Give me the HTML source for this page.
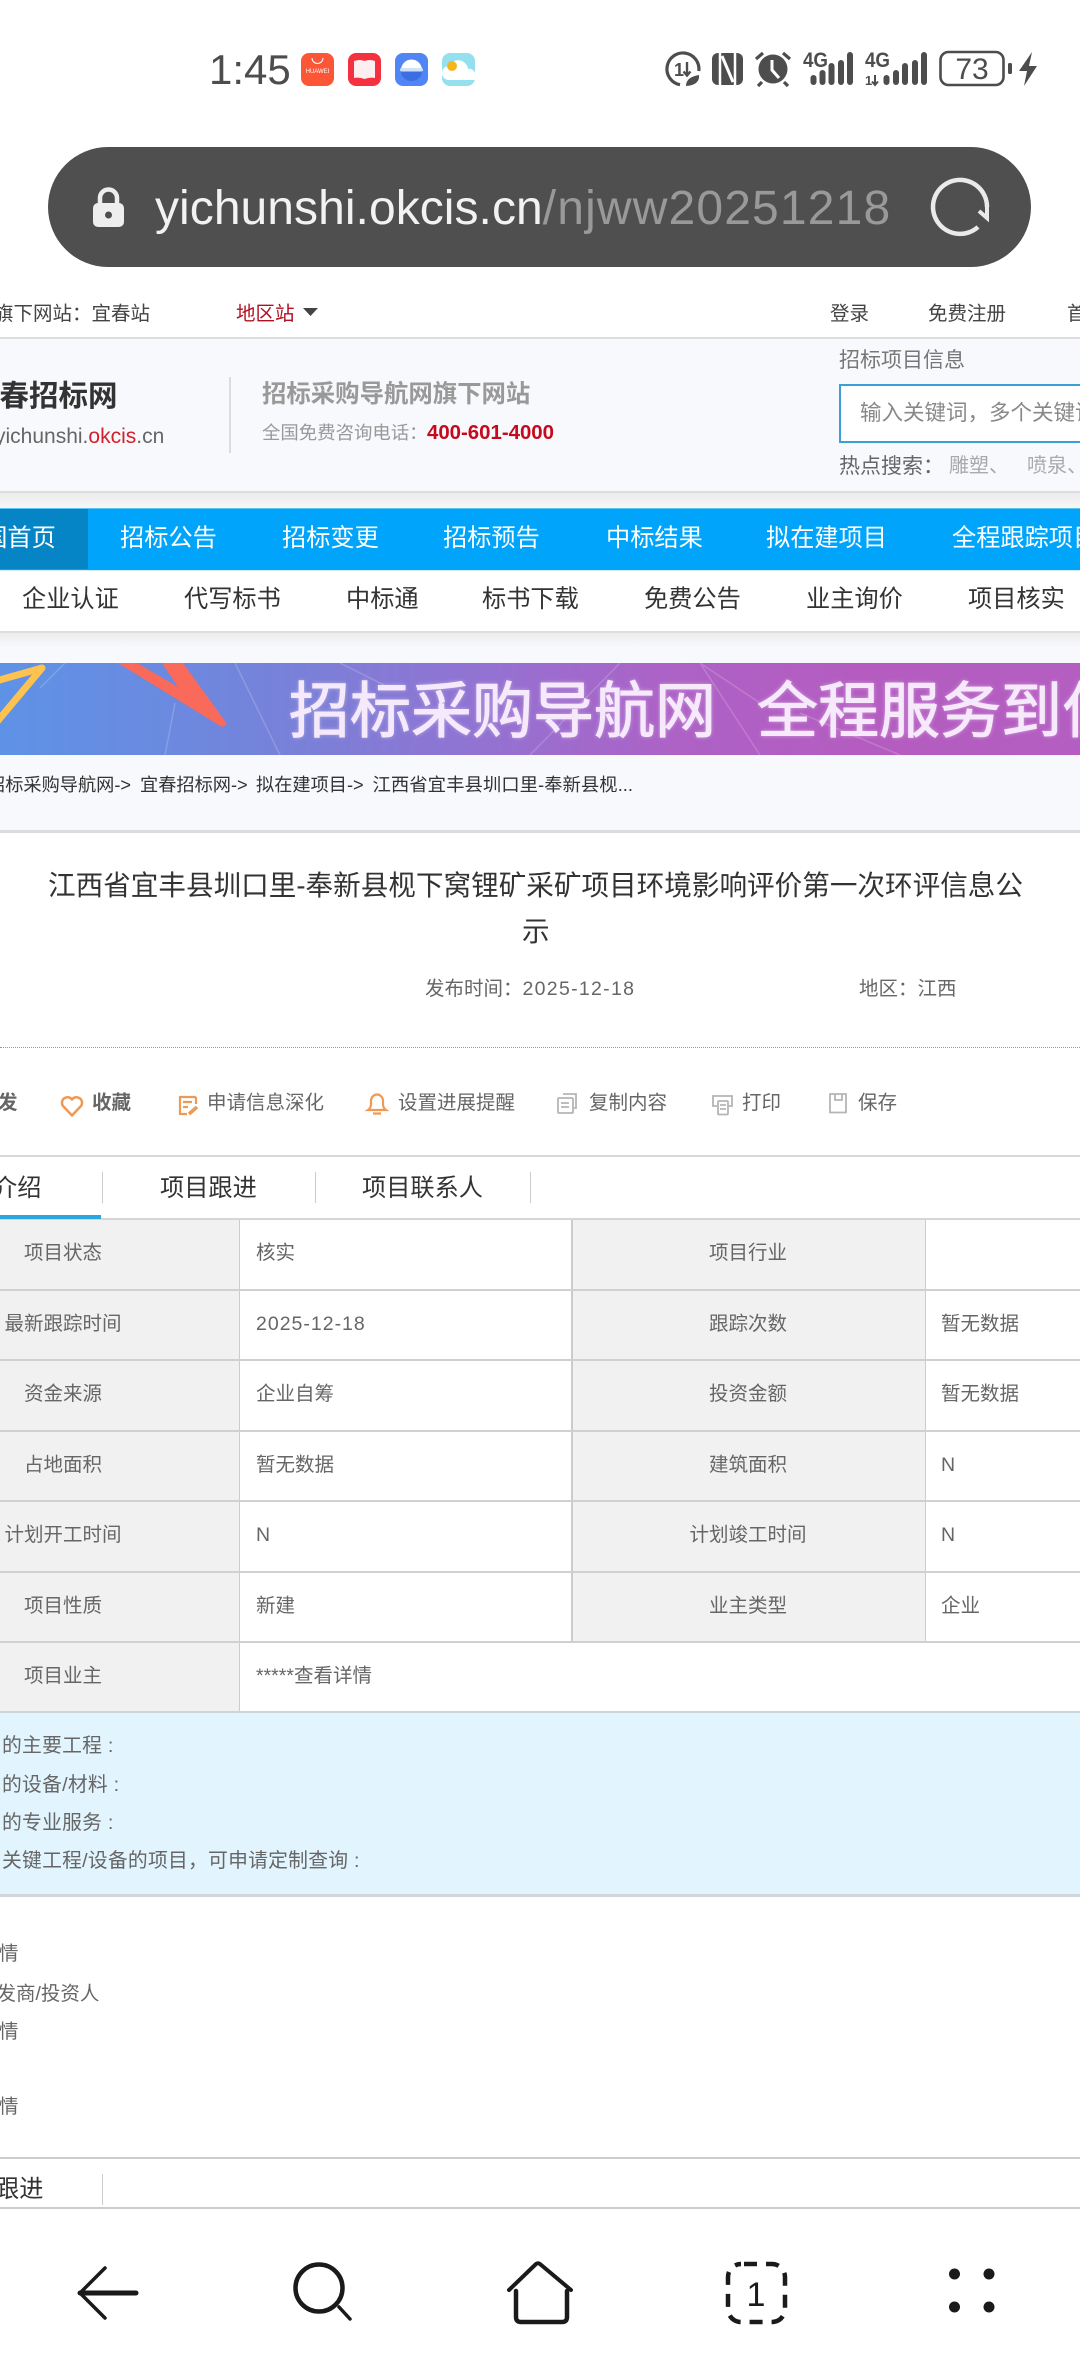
<!DOCTYPE html>
<html lang="zh"><head><meta charset="utf-8"><title>江西省宜丰县圳口里-奉新县枧下窝锂矿采矿项目</title>
<style>
html,body{margin:0;padding:0;background:#fff}
#p{position:relative;width:1080px;height:2376px;overflow:hidden;background:#fff;font-family:"Liberation Sans","Noto Sans CJK SC",sans-serif;color:#666}
.t{position:absolute;white-space:nowrap;line-height:1}
.b{position:absolute}
svg{position:absolute;overflow:visible}
.s20{font-size:19.5px}
.p{font-size:19.8px;letter-spacing:.25px}
.n{font-size:24.2px;color:#fff;top:527px}
.u{font-size:24.2px;color:#333;top:588px}
.c1{font-size:19.5px;transform:translateX(-50%);left:63px}
.c3{font-size:19.5px;transform:translateX(-50%);left:748px}
.c2{font-size:19.5px;left:256px}
.c4{font-size:19.5px;left:941px}
</style></head><body><div id="p">

<!-- status bar -->
<div class="t" style="left:209px;top:49px;font-size:42px;color:#4d4d4d">1:45</div>
<svg style="left:0;top:0" width="1080" height="110">
 <rect x="301" y="53" width="33" height="33" rx="8" fill="#fc5636"/>
 <path d="M312 58a5.500 5.500 0 0 0 11 0" fill="none" stroke="#fff" stroke-width="1"/>
 <text x="317.500" y="73" font-size="6" fill="#fff" text-anchor="middle" font-family="Liberation Sans">HUAWEI</text>
 <rect x="348" y="53" width="33" height="33" rx="8" fill="#f5313f"/>
 <path d="M354 61q6-2 10.500 0q5-2 10.500 0v17q-5-1-10.500 1q-5-2-10.500-1z" fill="#fdeef0"/>
 <rect x="395" y="53" width="33" height="33" rx="8" fill="#4f85f5"/>
 <path d="M401 70a10.500 10.500 0 0 1 21 0z" fill="#fff"/><path d="M401 71h21a10.500 10 0 0 1-21 0z" fill="#3b6ee0"/><rect x="400" y="68" width="23" height="3.500" rx="1.700" fill="#cfe0fb"/>
 <rect x="442" y="53" width="33" height="33" rx="8" fill="#95e0ee"/>
 <path d="M449 80a7 7 0 0 1 0-14a10 10 0 0 1 19 3a5.500 5.500 0 0 1 7 5v6z" fill="#fff"/>
 <circle cx="452" cy="66" r="5" fill="#f5b51f"/>

 <!-- data saver -->
 <path d="M680 84.700A16 16 0 1 1 698.800 71" fill="none" stroke="#4d4d4d" stroke-width="3.200"/>
 <text x="674" y="76" font-size="18" font-weight="bold" fill="#4d4d4d" font-family="Liberation Sans">1</text>
 <path d="M687 62v13m-3.500-3.500l3.500 4 3.500-4" fill="none" stroke="#4d4d4d" stroke-width="2.400"/>
 <path d="M686 86q0-9 13-11q1 10-13 11z" fill="#4d4d4d"/>
 <!-- NFC -->
 <rect x="712" y="53" width="31" height="32" rx="6" fill="#4d4d4d"/>
 <path d="M720 53v32M735 53v32" stroke="#fff" stroke-width="2.500"/>
 <path d="M722 56l11 26" stroke="#fff" stroke-width="3"/>
 <!-- alarm -->
 <circle cx="773" cy="69" r="14.500" fill="#4d4d4d"/>
 <path d="M772 60v10l7 8" fill="none" stroke="#fff" stroke-width="3"/>
 <path d="M756 59l7-6M790 59l-7-6M762 82l-4 4M784 82l4 4" stroke="#4d4d4d" stroke-width="3.200"/>
 <!-- sig 1 -->
 <text x="803" y="67" font-size="21" font-weight="bold" fill="#4d4d4d" font-family="Liberation Sans" textLength="25" lengthAdjust="spacingAndGlyphs">4G</text>
 <g fill="#4d4d4d"><rect x="810.500" y="75" width="6" height="10" rx="3"/><rect x="819.500" y="70" width="6" height="15" rx="3"/><rect x="828.500" y="63" width="6" height="22" rx="3"/><rect x="838" y="60" width="6" height="25" rx="3"/><rect x="847" y="52" width="6" height="33" rx="3"/></g>
 <!-- sig 2 -->
 <text x="865" y="67" font-size="21" font-weight="bold" fill="#4d4d4d" font-family="Liberation Sans" textLength="25" lengthAdjust="spacingAndGlyphs">4G</text>
 <text x="865" y="85" font-size="13" font-weight="bold" fill="#4d4d4d" font-family="Liberation Sans">1</text>
 <path d="M875 75v10m-3-3.500l3 3.500 3-3.500" fill="none" stroke="#4d4d4d" stroke-width="2"/>
 <g fill="#4d4d4d"><rect x="883.500" y="75" width="6" height="10" rx="3"/><rect x="893" y="70" width="6" height="15" rx="3"/><rect x="902" y="63" width="6" height="22" rx="3"/><rect x="912" y="60" width="6" height="25" rx="3"/><rect x="921" y="52" width="6" height="33" rx="3"/></g>
 <!-- battery -->
 <rect x="940.500" y="52" width="63" height="33" rx="8" fill="none" stroke="#4d4d4d" stroke-width="2.600"/>
 <text x="972" y="79" font-size="30" fill="#4d4d4d" text-anchor="middle" font-family="Liberation Sans">73</text>
 <rect x="1008" y="63" width="4" height="11" rx="1.500" fill="#4d4d4d"/>
 <path d="M1032 52l-13 19h8l-3 15 13-20h-8z" fill="#4d4d4d"/>
</svg>

<!-- url bar -->
<div class="b" style="left:48px;top:147px;width:983px;height:120px;border-radius:60px;background:#4f4f4f"></div>
<svg style="left:0;top:0" width="1080" height="270">
 <path d="M100 207v-9a8.500 8.500 0 0 1 17 0v9" fill="none" stroke="#eee" stroke-width="4.500"/>
 <rect x="93" y="203" width="31" height="24" rx="5" fill="#eee"/><circle cx="108.500" cy="215" r="3.500" fill="#4f4f4f"/>
 <path d="M978 227A27 27 0 1 1 987 207" fill="none" stroke="#eaeaea" stroke-width="4.500"/>
 <path d="M987 204v14l-8-7" fill="none" stroke="#eaeaea" stroke-width="4"/>
</svg>
<div class="t" style="left:155px;top:181px;font-size:48px;line-height:56px;color:#f2f2f2;letter-spacing:.05px">yichunshi.okcis.cn<span style="color:#999;letter-spacing:1.150px">/njww20251218</span></div>

<!-- top links -->
<div class="t s20" style="left:-6px;top:305px;color:#444">旗下网站：宜春站</div>
<div class="t s20" style="left:236px;top:305px;color:#b01020">地区站</div>
<svg style="left:0;top:0" width="400" height="330"><path d="M303 308h15l-7.500 8z" fill="#444"/></svg>
<div class="t s20" style="left:830px;top:305px;color:#444">登录</div>
<div class="t s20" style="left:928px;top:305px;color:#444">免费注册</div>
<div class="t s20" style="left:1067px;top:305px;color:#444">首页</div>

<!-- header -->
<div class="b" style="left:0;top:337px;width:1080px;height:156px;box-sizing:border-box;background:#f8f9fc;border-top:2px solid #ddd;border-bottom:2px solid #ddd"></div>
<div class="b" style="left:0;top:493px;width:1080px;height:15px;background:linear-gradient(#ececec,#f7f7f7)"></div>
<div class="t" style="left:-30px;top:382px;font-size:29.500px;font-weight:bold;color:#333">宜春招标网</div>
<div class="t" style="left:-5px;top:426px;font-size:21px;color:#666">yichunshi.<span style="color:#d4202c">okcis</span>.cn</div>
<div class="b" style="left:229px;top:377px;width:2px;height:76px;background:#ddd"></div>
<div class="t" style="left:262px;top:383px;font-size:24.400px;font-weight:bold;color:#999">招标采购导航网旗下网站</div>
<div class="t" style="left:262px;top:424px;font-size:18.400px;color:#999">全国免费咨询电话：</div>
<div class="t" style="left:427px;top:423px;font-size:20.400px;font-weight:bold;color:#c60a1e">400-601-4000</div>
<div class="t" style="left:839px;top:350px;font-size:21px;color:#777">招标项目信息</div>
<div class="b" style="left:839px;top:384px;width:300px;height:59px;box-sizing:border-box;background:#fff;border:2px solid #3ba0d8"></div>
<div class="t" style="left:860px;top:403px;font-size:21.500px;color:#888">输入关键词，多个关键词</div>
<div class="t" style="left:839px;top:456px;font-size:21px;color:#666">热点搜索：</div>
<div class="t" style="left:949px;top:456px;font-size:20px;color:#aaa">雕塑、</div>
<div class="t" style="left:1027px;top:456px;font-size:20px;color:#aaa">喷泉、</div>

<!-- main nav -->
<div class="b" style="left:0;top:508px;width:1080px;height:62px;background:#00a5fb;border-top:1px solid #5cc4f5;box-sizing:border-box"></div>
<div class="b" style="left:0;top:509px;width:88px;height:60px;background:#0585c6"></div>
<div class="t n" style="left:-41px">全国首页</div>
<div class="t n" style="left:120px">招标公告</div>
<div class="t n" style="left:282px">招标变更</div>
<div class="t n" style="left:443px">招标预告</div>
<div class="t n" style="left:606px">中标结果</div>
<div class="t n" style="left:766px">拟在建项目</div>
<div class="t n" style="left:952px">全程跟踪项目</div>

<!-- sub nav -->
<div class="b" style="left:0;top:570px;width:1080px;height:63px;box-sizing:border-box;background:#fff;border-top:1px solid #d0ecfa;border-bottom:2px solid #ddd"></div>
<div class="t u" style="left:22px">企业认证</div>
<div class="t u" style="left:184px">代写标书</div>
<div class="t u" style="left:346px">中标通</div>
<div class="t u" style="left:482px">标书下载</div>
<div class="t u" style="left:644px">免费公告</div>
<div class="t u" style="left:806px">业主询价</div>
<div class="t u" style="left:968px">项目核实</div>

<!-- page bg + banner -->
<div class="b" style="left:0;top:633px;width:1080px;height:200px;background:linear-gradient(#ededed 0,#f8f9fc 15px)"></div>
<div class="b" style="left:0;top:663px;width:1080px;height:92px;overflow:hidden;background:linear-gradient(90deg,#5e92e6 0,#6a8ae0 15%,#7a80d8 28%,#9372d2 45%,#ad62c6 62%,#b45cc0 80%,#b45ec2 100%)">
 <svg style="left:0;top:0" width="1080" height="92">
  <g stroke="#fff" stroke-opacity=".18" stroke-width="1.500" fill="none">
   <path d="M235 0l45 92M175 40l-10 52M40 25l25-25M530 92L620 0M340 0l50 25M760 92l-60-92M800 50l100 42M700 0l60 40"/>
  </g>
  <path d="M-4 18L42 5L-4 60" fill="none" stroke="#fdc24f" stroke-width="7" stroke-linejoin="round"/>
  <polygon points="118,0 222,64 227,61 183,0 162,0 178,24 137,0" fill="#f96a5a"/>
 </svg>
 <div class="t" style="left:289px;top:18px;font-size:61px;color:#f6e9fb;-webkit-text-stroke:1px #f6e9fb;text-shadow:0 0 4px rgba(255,255,255,.5)">招标采购导航网</div>
 <div class="t" style="left:757px;top:18px;font-size:61px;color:#f6e9fb;-webkit-text-stroke:1px #f6e9fb;text-shadow:0 0 4px rgba(255,255,255,.5)">全程服务到位</div>
</div>
<div class="t" style="left:-13px;top:776px;font-size:18.200px;color:#333">招标采购导航网-&gt;</div>
<div class="t" style="left:140px;top:776px;font-size:18.200px;color:#333">宜春招标网-&gt;</div>
<div class="t" style="left:256px;top:776px;font-size:18.200px;color:#333">拟在建项目-&gt;</div>
<div class="t" style="left:372.500px;top:776px;font-size:18.400px;color:#333">江西省宜丰县圳口里-奉新县枧...</div>
<div class="b" style="left:0;top:830px;width:1080px;height:3px;background:#dcdcdc"></div>

<!-- title -->
<div class="t" style="left:48px;top:872px;font-size:27.600px;color:#333">江西省宜丰县圳口里-奉新县枧下窝锂矿采矿项目环境影响评价第一次环评信息公</div>
<div class="t" style="left:522px;top:918px;font-size:27.600px;color:#333">示</div>
<div class="t" style="left:425px;top:980px;font-size:19.500px;color:#666">发布时间：<span style="letter-spacing:1.300px">2025-12-18</span></div>
<div class="t" style="left:859px;top:980px;font-size:19.500px;color:#666">地区：江西</div>
<div class="b" style="left:0;top:1047px;width:1080px;height:0;border-top:1px dotted #999"></div>

<!-- toolbar -->
<div class="t" style="left:-2px;top:1094px;font-size:19.500px;font-weight:bold;color:#666">发</div>
<div class="t" style="left:92px;top:1094px;font-size:19.500px;font-weight:bold;color:#666">收藏</div>
<div class="t s20" style="left:207px;top:1094px">申请信息深化</div>
<div class="t s20" style="left:398px;top:1094px">设置进展提醒</div>
<div class="t s20" style="left:589px;top:1094px">复制内容</div>
<div class="t s20" style="left:742px;top:1094px">打印</div>
<div class="t s20" style="left:858px;top:1094px">保存</div>
<svg style="left:0;top:0" width="1080" height="1130">
 <path d="M72 1115.500L63 1106a5.500 5.500 0 0 1 9-6.500a5.500 5.500 0 0 1 9 6.500z" fill="none" stroke="#ee9a55" stroke-width="2.500" stroke-linejoin="round"/>
 <path d="M196 1097h-16v17h7M196 1097v7M183 1102h9M183 1107h5" fill="none" stroke="#ee9a55" stroke-width="2.200"/>
 <path d="M189 1114l8-7" stroke="#ee9a55" stroke-width="3.500"/>
 <path d="M368 1110h18q-3-2-3-6v-3a6 6.500 0 0 0-12 0v3q0 4-3 6zM373 1113.500h8" fill="none" stroke="#ee9a55" stroke-width="2.200"/>
 <g fill="none" stroke="#b5b5b5" stroke-width="1.800">
  <path d="M563 1094h13v14h-2"/><rect x="558" y="1098" width="15" height="15" rx="1"/><path d="M561 1103h8M561 1107h8"/>
  <path d="M717 1106h-4v-10h19v10h-4"/><rect x="718" y="1101" width="10" height="13.500" rx="1"/><path d="M720 1105h6M720 1109h6"/>
  <path d="M830 1094h16v18.500h-16z"/><path d="M835 1094v6h7v-6"/>
 </g>
</svg>

<!-- tabs -->
<div class="b" style="left:0;top:1155px;width:1080px;height:2px;background:#d9d9d9"></div>
<div class="t" style="left:-7px;top:1177px;font-size:24.200px;color:#333">介绍</div>
<div class="t" style="left:160px;top:1177px;font-size:24.200px;color:#333">项目跟进</div>
<div class="t" style="left:362px;top:1177px;font-size:24.200px;color:#333">项目联系人</div>
<div class="b" style="left:102px;top:1172px;width:1px;height:31px;background:#ccc"></div>
<div class="b" style="left:315px;top:1172px;width:1px;height:31px;background:#ccc"></div>
<div class="b" style="left:530px;top:1172px;width:1px;height:31px;background:#ccc"></div>
<div class="b" style="left:0;top:1218px;width:1080px;height:2px;background:#d6d6d6"></div>
<div class="b" style="left:0;top:1215px;width:101px;height:4px;background:#2ba6e0"></div>

<!-- table -->
<div class="b" style="left:0;top:1220px;width:239px;height:492px;background:#f1f1f1"></div>
<div class="b" style="left:572px;top:1220px;width:353px;height:421px;background:#f1f1f1"></div>
<div class="b" style="left:239px;top:1220px;width:1px;height:492px;background:#ccc"></div>
<div class="b" style="left:571px;top:1220px;width:1.500px;height:421px;background:#ccc"></div>
<div class="b" style="left:925px;top:1220px;width:1px;height:421px;background:#ccc"></div>
<div class="b" style="left:0;top:1289px;width:1080px;height:1.500px;background:#d0d0d0"></div>
<div class="b" style="left:0;top:1359px;width:1080px;height:1.500px;background:#d0d0d0"></div>
<div class="b" style="left:0;top:1430px;width:1080px;height:1.500px;background:#d0d0d0"></div>
<div class="b" style="left:0;top:1500px;width:1080px;height:1.500px;background:#d0d0d0"></div>
<div class="b" style="left:0;top:1571px;width:1080px;height:1.500px;background:#d0d0d0"></div>
<div class="b" style="left:0;top:1641px;width:1080px;height:1.500px;background:#d0d0d0"></div>

<div class="t c1" style="top:1244px">项目状态</div><div class="t c2" style="top:1244px">核实</div><div class="t c3" style="top:1244px">项目行业</div>
<div class="t c1" style="top:1315px">最新跟踪时间</div><div class="t c2" style="top:1315px;letter-spacing:1px">2025-12-18</div><div class="t c3" style="top:1315px">跟踪次数</div><div class="t c4" style="top:1315px">暂无数据</div>
<div class="t c1" style="top:1385px">资金来源</div><div class="t c2" style="top:1385px">企业自筹</div><div class="t c3" style="top:1385px">投资金额</div><div class="t c4" style="top:1385px">暂无数据</div>
<div class="t c1" style="top:1456px">占地面积</div><div class="t c2" style="top:1456px">暂无数据</div><div class="t c3" style="top:1456px">建筑面积</div><div class="t c4" style="top:1456px">N</div>
<div class="t c1" style="top:1526px">计划开工时间</div><div class="t c2" style="top:1526px">N</div><div class="t c3" style="top:1526px">计划竣工时间</div><div class="t c4" style="top:1526px">N</div>
<div class="t c1" style="top:1597px">项目性质</div><div class="t c2" style="top:1597px">新建</div><div class="t c3" style="top:1597px">业主类型</div><div class="t c4" style="top:1597px">企业</div>
<div class="t c1" style="top:1667px">项目业主</div><div class="t c2" style="top:1667px">*****查看详情</div>

<!-- blue panel -->
<div class="b" style="left:0;top:1711px;width:1080px;height:186px;box-sizing:border-box;background:#e2f4fe;border-top:2px solid #ccd5da;border-bottom:3px solid #d0d6da"></div>
<div class="t p" style="left:2px;top:1737px">的主要工程 :</div>
<div class="t p" style="left:2px;top:1776px">的设备/材料 :</div>
<div class="t p" style="left:2px;top:1814px">的专业服务 :</div>
<div class="t p" style="left:2px;top:1852px">关键工程/设备的项目，可申请定制查询 :</div>

<div class="t s20" style="left:-1px;top:1945px">情</div>
<div class="t s20" style="left:-23px;top:1985px">开发商/投资人</div>
<div class="t s20" style="left:-1px;top:2023px">情</div>
<div class="t s20" style="left:-1px;top:2098px">情</div>

<div class="b" style="left:0;top:2157px;width:1080px;height:2px;background:#ccc"></div>
<div class="t" style="left:-5px;top:2178px;font-size:24.200px;color:#333">跟进</div>
<div class="b" style="left:102px;top:2174px;width:1px;height:31px;background:#ccc"></div>
<div class="b" style="left:0;top:2207px;width:1080px;height:2px;background:#ccc"></div>

<!-- bottom nav -->
<svg style="left:0;top:0" width="1080" height="2376">
 <g fill="none" stroke="#1a1a1a" stroke-linecap="round" stroke-linejoin="round">
  <path d="M80 2293h56" stroke-width="5"/><path d="M105 2268l-25 25 25 25" stroke-width="3.500"/>
  <circle cx="319" cy="2288" r="23.500" stroke-width="4.500"/><path d="M339 2307l11 12" stroke-width="3.500"/>
  <path d="M509 2290l27-26a3 3 0 0 1 4 0l31 26" stroke-width="4"/>
  <path d="M516 2291v26q0 5 5 5h41q5 0 5-5v-26" stroke-width="4.500"/>
  <rect x="728" y="2264" width="57" height="58" rx="13" stroke-width="4.500" stroke-dasharray="13 9" stroke-linecap="butt" stroke-dashoffset="-3"/>
 </g>
 <text x="756" y="2306" font-size="34" fill="#1a1a1a" text-anchor="middle" font-family="Liberation Sans">1</text>
 <g fill="#1a1a1a"><circle cx="954.500" cy="2274" r="5.500"/><circle cx="989" cy="2274" r="5.500"/><circle cx="954.500" cy="2307" r="5.500"/><circle cx="989" cy="2307" r="5.500"/></g>
</svg>
</div></body></html>
